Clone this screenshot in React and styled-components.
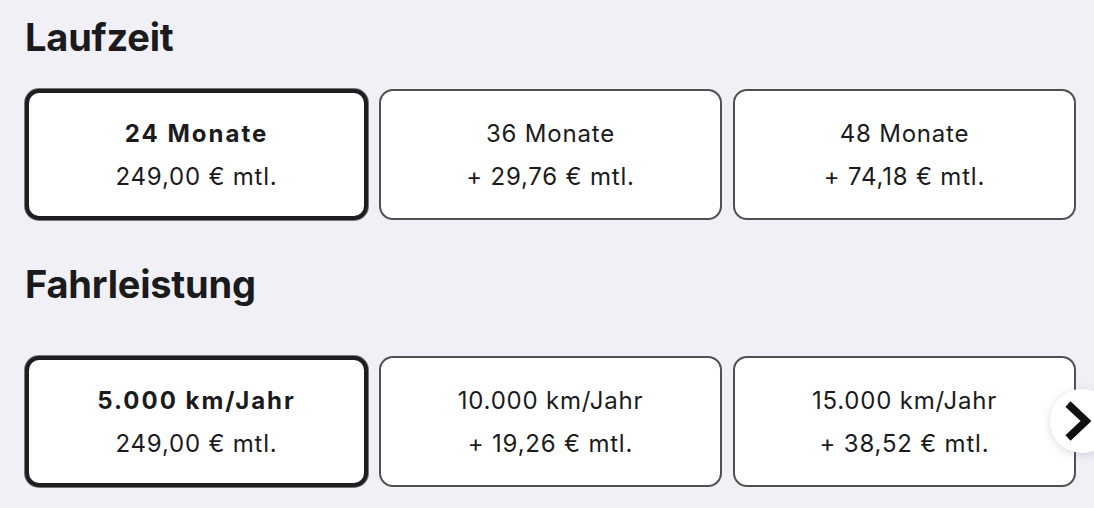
import React from 'react'
import styled, { createGlobalStyle } from 'styled-components'

const GlobalStyle = createGlobalStyle`
  html, body {
    margin: 0;
    padding: 0;
    background: #f2f0f7;
    font-family: 'Inter', 'Liberation Sans', sans-serif;
    color: #1b1b1d;
    overflow: hidden;
  }
`

const Page = styled.div`
  width: 1094px;
  height: 508px;
  padding: 13px 0 0 25px;
  box-sizing: border-box;
  background: #f2f0f7;
  overflow: hidden;
`

const Section = styled.section`
  display: flex;
  flex-direction: column;
  margin-bottom: ${(props) => props.gap || 0}px;
`

const Title = styled.h2`
  margin: 0 0 ${(props) => props.space}px 0;
  font-size: 38px;
  line-height: 48px;
  font-weight: 700;
  letter-spacing: -0.2px;
`

const OptionRow = styled.div`
  position: relative;
  display: grid;
  grid-template-columns: repeat(3, 343px);
  column-gap: 11px;
`

const Option = styled.div`
  height: 131px;
  box-sizing: border-box;
  border-radius: 14px;
  background: #fff;
  border: ${(props) => (props.selected ? '4px solid #1e1e20' : '2px solid #505053')};
  box-shadow: ${(props) => (props.selected ? '0 0 0 1px #77777a' : 'none')};
  display: flex;
  flex-direction: column;
  align-items: center;
  justify-content: center;
  gap: 15px;
  padding-top: 2px;
  cursor: pointer;
`

const OptionLabel = styled.div`
  font-size: 24px;
  line-height: 28px;
  letter-spacing: ${(props) => (props.selected ? '2px' : '0.8px')};
  font-weight: ${(props) => (props.selected ? 700 : 400)};
`

const OptionPrice = styled.div`
  font-size: 24px;
  line-height: 28px;
  letter-spacing: 0.8px;
  font-weight: 400;
`

const NextButton = styled.button`
  position: absolute;
  right: -20px;
  top: 33px;
  width: 64px;
  height: 64px;
  border-radius: 50%;
  border: none;
  background: #fff;
  box-shadow: 0 2px 10px rgba(60, 50, 90, 0.18);
  display: flex;
  align-items: center;
  justify-content: flex-start;
  padding: 0 0 0 14px;
  cursor: pointer;
`

const sections = [
  {
    title: 'Laufzeit',
    space: 28,
    options: [
      { label: '24 Monate', price: '249,00 € mtl.' },
      { label: '36 Monate', price: '+ 29,76 € mtl.' },
      { label: '48 Monate', price: '+ 74,18 € mtl.' },
    ],
  },
  {
    title: 'Fahrleistung',
    space: 48,
    options: [
      { label: '5.000 km/Jahr', price: '249,00 € mtl.' },
      { label: '10.000 km/Jahr', price: '+ 19,26 € mtl.' },
      { label: '15.000 km/Jahr', price: '+ 38,52 € mtl.' },
    ],
    more: true,
  },
]

export default function App() {
  return (
    <Page>
      <GlobalStyle />
      {sections.map((s, i) => (
        <Section key={s.title} gap={i === 0 ? 40 : 0}>
          <Title space={s.space}>{s.title}</Title>
          <OptionRow>
            {s.options.map((o, j) => (
              <Option key={o.label} selected={j === 0}>
                <OptionLabel selected={j === 0}>{o.label}</OptionLabel>
                <OptionPrice>{o.price}</OptionPrice>
              </Option>
            ))}
            {s.more && (
              <NextButton aria-label="Weiter">
                <svg width="28" height="42" viewBox="0 0 28 42">
                  <path d="M4 4 L22 21 L4 38" fill="none" stroke="#111" strokeWidth="7.5" strokeLinejoin="miter" />
                </svg>
              </NextButton>
            )}
          </OptionRow>
        </Section>
      ))}
    </Page>
  )
}
